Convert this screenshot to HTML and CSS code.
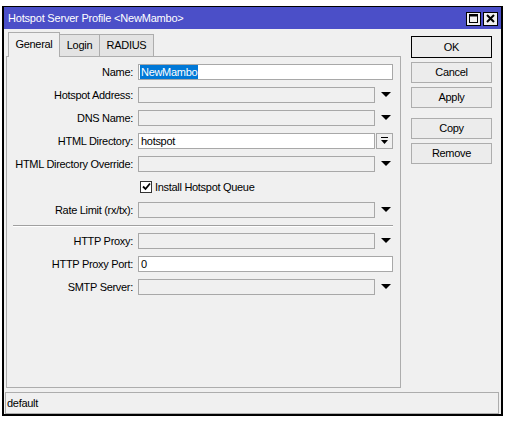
FILE: index.html
```html
<!DOCTYPE html>
<html>
<head>
<meta charset="utf-8">
<link rel="stylesheet" href="styles.css">
</head>
<body>
<div class="window">
  <div class="titlebar">
    <span class="title">Hotspot Server Profile &lt;NewMambo&gt;</span>
    <div class="tb-buttons">
      <span class="tb-btn"><svg width="11" height="11" viewBox="0 0 11 11"><rect x="1.5" y="1.5" width="8" height="8" fill="none" stroke="#000" stroke-width="1"/><rect x="1.5" y="1.5" width="8" height="2" fill="#000"/></svg></span>
      <span class="tb-btn"><svg width="11" height="11" viewBox="0 0 11 11"><path d="M2 2 L9 9 M9 2 L2 9" stroke="#000" stroke-width="2"/></svg></span>
    </div>
  </div>
  <div class="content">
    <div class="left">
      <div class="tabs">
        <div class="tab active">General</div>
        <div class="tab t-login">Login</div>
        <div class="tab t-radius">RADIUS</div>
      </div>
      <div class="panel">
        <div class="row">
          <label class="lbl">Name:</label>
          <div class="field input white full"><span class="sel">NewMambo</span></div>
        </div>
        <div class="row">
          <label class="lbl">Hotspot Address:</label>
          <div class="field input gray"></div>
          <span class="arrow"></span>
        </div>
        <div class="row">
          <label class="lbl">DNS Name:</label>
          <div class="field input gray"></div>
          <span class="arrow"></span>
        </div>
        <div class="row">
          <label class="lbl">HTML Directory:</label>
          <div class="field input white">hotspot</div>
          <span class="dbtn"><svg width="9" height="9" viewBox="0 0 9 9"><rect x="1" y="1" width="7" height="1" fill="#000"/><path d="M1 4 H8 L4.5 8 Z" fill="#000"/></svg></span>
        </div>
        <div class="row">
          <label class="lbl">HTML Directory Override:</label>
          <div class="field input gray"></div>
          <span class="arrow"></span>
        </div>
        <div class="row">
          <label class="lbl"></label>
          <div class="check-wrap">
            <span class="checkbox"><svg width="9" height="9" viewBox="0 0 9 9"><path d="M1 4.5 L3.5 7 L8 1.5" fill="none" stroke="#000" stroke-width="1.8"/></svg></span>
            <span class="check-label">Install Hotspot Queue</span>
          </div>
        </div>
        <div class="row">
          <label class="lbl">Rate Limit (rx/tx):</label>
          <div class="field input gray"></div>
          <span class="arrow"></span>
        </div>
        <div class="sep"></div>
        <div class="row">
          <label class="lbl">HTTP Proxy:</label>
          <div class="field input gray"></div>
          <span class="arrow"></span>
        </div>
        <div class="row">
          <label class="lbl">HTTP Proxy Port:</label>
          <div class="field input white full">0</div>
        </div>
        <div class="row">
          <label class="lbl">SMTP Server:</label>
          <div class="field input gray"></div>
          <span class="arrow"></span>
        </div>
      </div>
    </div>
    <div class="right">
      <div class="btn default">OK</div>
      <div class="btn">Cancel</div>
      <div class="btn">Apply</div>
      <div class="btn group">Copy</div>
      <div class="btn">Remove</div>
    </div>
  </div>
  <div class="status">default</div>
</div>
</body>
</html>
```
FILE: styles.css
```css
html, body {
  margin: 0;
  padding: 0;
  background: #ffffff;
}
body {
  font-family: "Liberation Sans", Arial, sans-serif;
  font-size: 11px;
  letter-spacing: -0.3px;
  color: #000;
}
.window {
  margin: 6px 0 0 2px;
  width: 501px;
  height: 410px;
  box-sizing: border-box;
  border: 2px solid #000;
  border-top-width: 1px;
  background: #f0f0f0;
  display: flex;
  flex-direction: column;
}
.titlebar {
  height: 22px;
  background: #4b4fc8;
  color: #fff;
  display: flex;
  align-items: center;
  padding-left: 4px;
  padding-right: 3px;
}
.title {
  font-size: 11px;
  letter-spacing: -0.2px;
  flex: 1;
  padding-top: 1px;
}
.tb-buttons {
  display: flex;
  gap: 2px;
  padding-top: 2px;
}
.tb-btn {
  width: 15px;
  height: 14px;
  background: #f0f0f0;
  border: 1px solid #000;
  box-sizing: border-box;
  display: flex;
  align-items: center;
  justify-content: center;
}
.tb-btn svg { display: block; }
.content {
  display: flex;
  padding: 3px 0 0 2px;
  height: 359px;
}
.left {
  width: 395px;
  display: flex;
  flex-direction: column;
}
.tabs {
  display: flex;
  align-items: flex-end;
  height: 24px;
  padding-left: 2px;
  position: relative;
  z-index: 1;
}
.tab {
  height: 22px;
  box-sizing: border-box;
  border: 1px solid #adadad;
  border-bottom: none;
  background: #e3e3e3;
  display: flex;
  align-items: center;
  justify-content: center;
  margin-left: -1px;
}
.tab.active {
  height: 25px;
  margin-bottom: -1px;
  background: #f0f0f0;
  width: 52px;
  margin-left: 0;
  padding-bottom: 2px;
  position: relative;
  z-index: 2;
}
.t-login { width: 41px; }
.t-radius { width: 55px; }
.panel {
  height: 332px;
  box-sizing: border-box;
  border: 1px solid #adadad;
  background: #f0f0f0;
  padding: 7px 7px 0 0;
  display: flex;
  flex-direction: column;
  gap: 7px;
}
.row {
  display: flex;
  align-items: center;
  height: 16px;
}
.lbl {
  width: 126px;
  text-align: right;
  margin-right: 5px;
  white-space: nowrap;
}
.field {
  height: 16px;
  box-sizing: border-box;
  border: 1px solid #a8a8a8;
  width: 237px;
  display: flex;
  align-items: center;
  padding-left: 2px;
}
.field.full { width: 255px; }
.white { background: #fff; }
.gray { background: #f0f0f0; }
.sel {
  background: #0078d7;
  color: #fff;
  height: 14px;
  line-height: 14px;
  padding: 0 1px;
  margin-left: -1px;
}
.arrow {
  width: 0;
  height: 0;
  border-left: 5px solid transparent;
  border-right: 5px solid transparent;
  border-top: 5px solid #000;
  margin-left: 6px;
}
.dbtn {
  width: 17px;
  height: 16px;
  box-sizing: border-box;
  border: 1px solid #a8a8a8;
  margin-left: 1px;
  display: flex;
  align-items: center;
  justify-content: center;
  background: #f0f0f0;
}
.dbtn svg { display: block; }
.check-wrap {
  display: flex;
  align-items: center;
  margin-left: 2px;
}
.checkbox {
  width: 12px;
  height: 12px;
  box-sizing: border-box;
  border: 1px solid #333;
  background: #fff;
  display: flex;
  align-items: center;
  justify-content: center;
  margin-right: 3px;
}
.checkbox svg { display: block; }
.sep {
  height: 1px;
  background: #a0a0a0;
  margin: 0 0 -1px 6px;
  width: 380px;
  border-bottom: 1px solid #fff;
}
.right {
  margin-left: 10px;
  padding-top: 4px;
  display: flex;
  flex-direction: column;
  gap: 4px;
}
.btn {
  width: 81px;
  height: 21px;
  box-sizing: border-box;
  border: 1px solid #adadad;
  background: #ececec;
  display: flex;
  align-items: center;
  justify-content: center;
}
.btn.default {
  border-color: #000;
  height: 22px;
}
.btn.group { margin-top: 6px; }
.status {
  margin: 3px 2px 0 1px;
  height: 22px;
  box-sizing: border-box;
  border: 1px solid #adadad;
  display: flex;
  align-items: center;
  padding-left: 1px;
}
```
